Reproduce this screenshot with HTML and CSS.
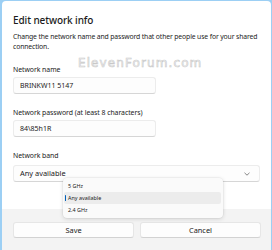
FILE: index.html
```html
<!DOCTYPE html>
<html>
<head>
<meta charset="utf-8">
<link rel="stylesheet" href="styles.css">
</head>
<body>
<div class="dialog">
  <div class="content">
    <div class="title">Edit network info</div>
    <div class="desc">Change the network name and password that other people use for your shared connection.</div>
    <div class="watermark">ElevenForum.com</div>
    <div class="field">
      <div class="label">Network name</div>
      <div class="input">BRINKW11 5147</div>
    </div>
    <div class="field">
      <div class="label">Network password (at least 8 characters)</div>
      <div class="input">84\85h1R</div>
    </div>
    <div class="field">
      <div class="label">Network band</div>
      <div class="select">
        <span>Any available</span>
        <svg class="chev" width="6" height="4" viewBox="0 0 6 4"><path d="M0.5 0.8 L3 3.2 L5.5 0.8" fill="none" stroke="#777" stroke-width="0.9"/></svg>
      </div>
    </div>
  </div>
  <div class="popup">
    <div class="opt">5 GHz</div>
    <div class="opt sel"><i class="bar"></i>Any available</div>
    <div class="opt">2.4 GHz</div>
  </div>
  <div class="footer">
    <div class="btn">Save</div>
    <div class="btn">Cancel</div>
  </div>
</div>
</body>
</html>
```
FILE: styles.css
```css
html, body {
  margin: 0;
  padding: 0;
}
body {
  width: 272px;
  height: 250px;
  background: #9ccff4;
  font-family: "Noto Sans", "Open Sans", sans-serif;
  color: #1b1b1b;
  overflow: hidden;
}
.dialog {
  position: relative;
  margin: 1px 1px 0 2px;
  height: 249px;
  background: #ffffff;
  border-radius: 4px 4px 0 0;
  display: flex;
  flex-direction: column;
  overflow: hidden;
}
.content {
  flex: 1;
  padding: 12px 11px 0 11px;
}
.title {
  font-size: 10px;
  line-height: 14px;
  font-weight: 500;
  letter-spacing: -0.1px;
}
.desc {
  margin-top: 5px;
  font-size: 6.8px;
  line-height: 9.5px;
  letter-spacing: -0.12px;
}
.watermark {
  position: absolute;
  left: 76px;
  top: 54px;
  font-size: 12px;
  line-height: 16px;
  letter-spacing: 1.1px;
  color: #ffffff;
  -webkit-text-stroke: 0.6px #c8c8c8;
  font-family: "DejaVu Sans", sans-serif;
}
.field {
  margin-top: 14px;
}
.field:first-of-type {
  margin-top: 13px;
}
.label {
  font-size: 6.9px;
  line-height: 10px;
  margin-bottom: 2px;
  letter-spacing: -0.05px;
}
.input, .select {
  height: 17px;
  box-sizing: border-box;
  background: #fdfdfd;
  border: 1px solid #ececec;
  border-bottom-color: #d6d6d6;
  border-radius: 3px;
  font-size: 7px;
  line-height: 15px;
  padding: 0 6px;
}
.input {
  width: 143px;
}
.select {
  margin-top: 4px;
  display: flex;
  align-items: center;
  justify-content: space-between;
  font-size: 7.4px;
}
.chev {
  margin-right: 3px;
}
.popup {
  position: absolute;
  left: 61px;
  top: 177px;
  width: 160px;
  padding: 2px 0;
  background: #fafafa;
  border-radius: 4px;
  box-shadow: 0 1px 4px rgba(0,0,0,0.14), 0 0 0 0.5px rgba(0,0,0,0.06);
  z-index: 2;
}
.opt {
  position: relative;
  height: 12px;
  line-height: 12px;
  margin: 0 2px 0 1px;
  padding-left: 4px;
  font-size: 5.4px;
  border-radius: 2px;
}
.opt.sel {
  background: #ececec;
}
.bar {
  position: absolute;
  left: 1px;
  top: 3px;
  width: 1.3px;
  height: 6px;
  background: #005fb8;
  border-radius: 1px;
}
.footer {
  height: 41px;
  box-sizing: border-box;
  background: #f3f3f3;
  padding: 13px 10px 0 11px;
  display: flex;
  gap: 6px;
}
.btn {
  flex: 1;
  height: 16px;
  background: #fdfdfd;
  border: 1px solid #e6e6e6;
  border-bottom-color: #d2d2d2;
  border-radius: 3px;
  box-sizing: border-box;
  text-align: center;
  font-size: 7.4px;
  line-height: 14px;
}
```
